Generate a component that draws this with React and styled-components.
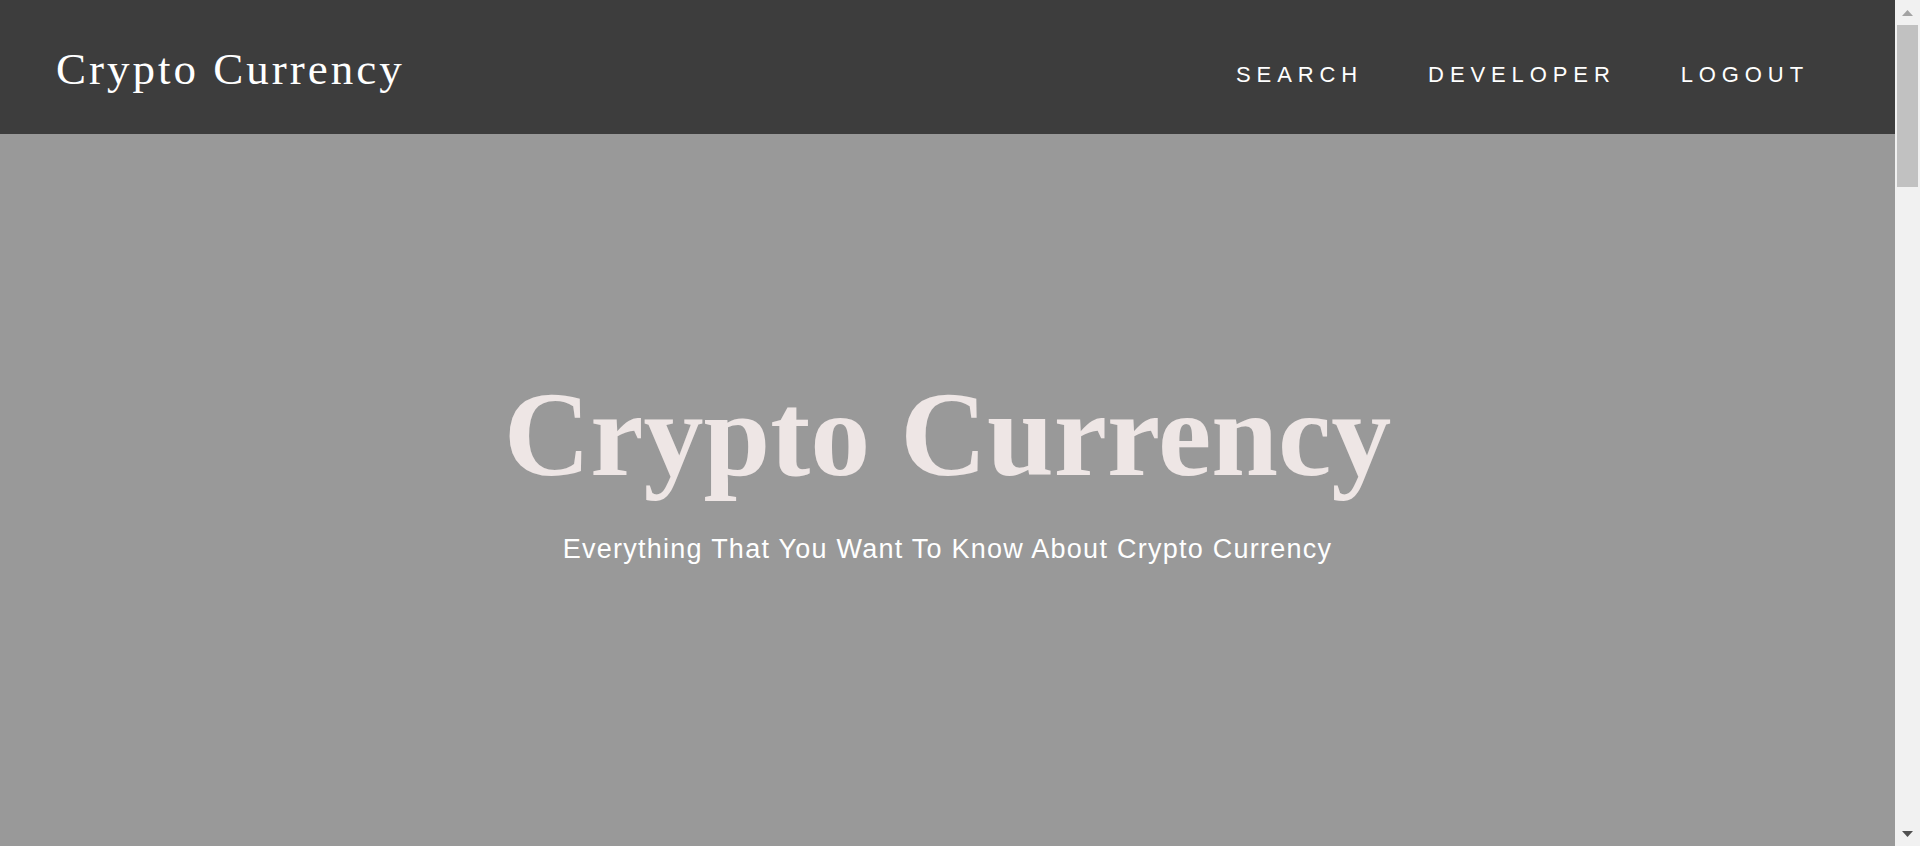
import React from 'react'
import styled, { createGlobalStyle } from 'styled-components'

const GlobalStyle = createGlobalStyle`
  html, body {
    margin: 0;
    padding: 0;
    background: #f1f1f1;
  }
  ::-webkit-scrollbar {
    display: none;
  }
`

const Page = styled.div`
  margin-right: 25px;
  min-height: 4157px;
  background: #999999;
`

const Header = styled.header`
  height: 134px;
  box-sizing: border-box;
  padding: 0 86px 0 56px;
  background: #3d3d3d;
  display: flex;
  justify-content: space-between;
  align-items: center;
`

const Logo = styled.h1`
  margin: 0;
  padding-top: 3px;
  font-family: "Liberation Serif", "Times New Roman", serif;
  font-weight: 400;
  font-size: 45px;
  letter-spacing: 3px;
  color: #ffffff;
`

const Nav = styled.nav`
  display: flex;
  align-items: center;
  gap: 65px;
  padding-top: 16px;
`

const NavLink = styled.a`
  font-family: "Liberation Sans", Arial, sans-serif;
  font-size: 22px;
  letter-spacing: 5.9px;
  color: #ffffff;
  text-decoration: none;
  text-transform: uppercase;
  cursor: pointer;
`

const Hero = styled.section`
  display: flex;
  flex-direction: column;
  align-items: center;
  padding-top: 232px;
`

const Title = styled.h2`
  margin: 0;
  font-family: "Liberation Serif", "Times New Roman", serif;
  font-weight: 700;
  font-size: 120px;
  line-height: normal;
  color: #eee6e5;
`

const Subtitle = styled.p`
  margin: 30px 0 0;
  font-family: "Liberation Sans", Arial, sans-serif;
  font-size: 27px;
  letter-spacing: 1.25px;
  color: #ffffff;
`

// window scrollbar as seen in the screenshot
const Scrollbar = styled.div`
  position: fixed;
  top: 0;
  right: 0;
  width: 25px;
  height: 100vh;
  background: #f1f1f1;
  display: flex;
  flex-direction: column;
  align-items: center;
`

const Arrow = styled.div`
  height: 25px;
  flex: none;
  display: flex;
  align-items: center;
  justify-content: center;
  svg {
    display: block;
  }
`

const Track = styled.div`
  flex: 1;
  width: 100%;
  box-sizing: border-box;
  padding: 0 2px;
`

const Thumb = styled.div`
  height: 162px;
  background: #c1c1c1;
`

const links = ['Search', 'Developer', 'Logout']

const App = () => (
  <>
    <GlobalStyle />
    <Page>
      <Header>
        <Logo>Crypto Currency</Logo>
        <Nav>
          {links.map(link => (
            <NavLink key={link}>{link}</NavLink>
          ))}
        </Nav>
      </Header>
      <Hero>
        <Title>Crypto Currency</Title>
        <Subtitle>Everything That You Want To Know About Crypto Currency</Subtitle>
      </Hero>
    </Page>
    <Scrollbar>
      <Arrow>
        <svg width="11" height="6" viewBox="0 0 11 6">
          <path d="M5.5 0 L11 6 L0 6 Z" fill="#a3a3a3" />
        </svg>
      </Arrow>
      <Track>
        <Thumb />
      </Track>
      <Arrow>
        <svg width="11" height="6" viewBox="0 0 11 6">
          <path d="M0 0 L11 0 L5.5 6 Z" fill="#505050" />
        </svg>
      </Arrow>
    </Scrollbar>
  </>
)

export default App
